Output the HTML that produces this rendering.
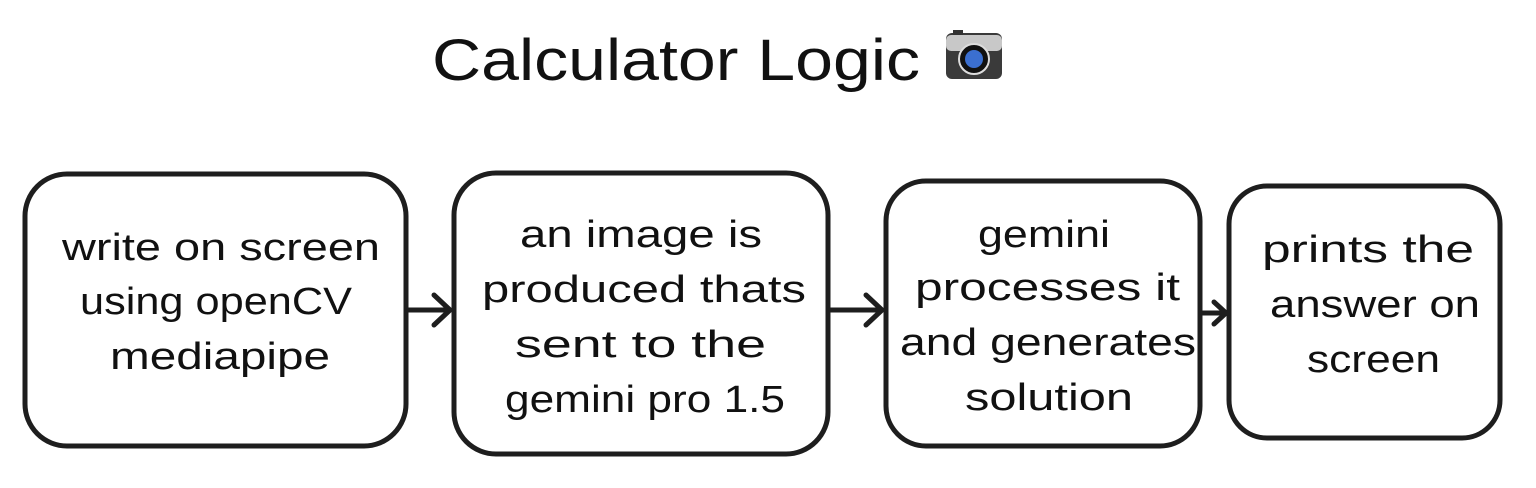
<!DOCTYPE html>
<html><head><meta charset="utf-8"><style>
html,body{margin:0;padding:0;background:#fff;}
svg{display:block}
text{font-family:"Liberation Sans",sans-serif;fill:#111;}
</style></head><body>
<svg width="1536" height="488" viewBox="0 0 1536 488" xmlns="http://www.w3.org/2000/svg">
<rect width="1536" height="488" fill="#fff"/>
<text x="432" y="80" font-size="58" textLength="488" lengthAdjust="spacingAndGlyphs">Calculator Logic</text>
<g>
<rect x="946" y="33" width="56" height="46" rx="6" fill="#3a3a3a"/>
<rect x="946" y="35" width="56" height="16" rx="5" fill="#c8c8c8"/>
<rect x="953" y="30" width="10" height="5" fill="#333"/>
<circle cx="974" cy="59" r="15" fill="#111" stroke="#ddd" stroke-width="2"/>
<circle cx="974" cy="59" r="9" fill="#3b6fd0"/>
</g>
<g fill="none" stroke="#1e1e1e" stroke-width="5" stroke-linecap="round" stroke-linejoin="round">
<rect x="25" y="174" width="381" height="272" rx="42"/>
<rect x="454" y="173" width="374" height="281" rx="42"/>
<rect x="886" y="181" width="314" height="265" rx="40"/>
<rect x="1229" y="186" width="271" height="252" rx="38"/>
<path d="M408 310 H450 M434 295 L450 310 L434 325"/>
<path d="M830 310 H882 M866 295 L882 310 L866 325"/>
<path d="M1202 313 H1226 M1214 302 L1226 313 L1214 324"/>
</g>
<g font-size="38" lengthAdjust="spacingAndGlyphs">
<text x="62" y="260" textLength="318" lengthAdjust="spacingAndGlyphs">write on screen</text>
<text x="80" y="314" textLength="272" lengthAdjust="spacingAndGlyphs">using openCV</text>
<text x="110" y="369" textLength="220" lengthAdjust="spacingAndGlyphs">mediapipe</text>
<text x="520" y="247" textLength="242" lengthAdjust="spacingAndGlyphs">an image is</text>
<text x="482" y="302" textLength="324" lengthAdjust="spacingAndGlyphs">produced thats</text>
<text x="515" y="357" textLength="251" lengthAdjust="spacingAndGlyphs">sent to the</text>
<text x="505" y="412" textLength="280" lengthAdjust="spacingAndGlyphs">gemini pro 1.5</text>
<text x="978" y="247" textLength="132" lengthAdjust="spacingAndGlyphs">gemini</text>
<text x="915" y="300" textLength="265" lengthAdjust="spacingAndGlyphs">processes it</text>
<text x="900" y="355" textLength="296" lengthAdjust="spacingAndGlyphs">and generates</text>
<text x="965" y="410" textLength="168" lengthAdjust="spacingAndGlyphs">solution</text>
<text x="1262" y="262" textLength="212" lengthAdjust="spacingAndGlyphs">prints the</text>
<text x="1270" y="317" textLength="210" lengthAdjust="spacingAndGlyphs">answer on</text>
<text x="1307" y="372" textLength="133" lengthAdjust="spacingAndGlyphs">screen</text>
</g>
</svg>
</body></html>
